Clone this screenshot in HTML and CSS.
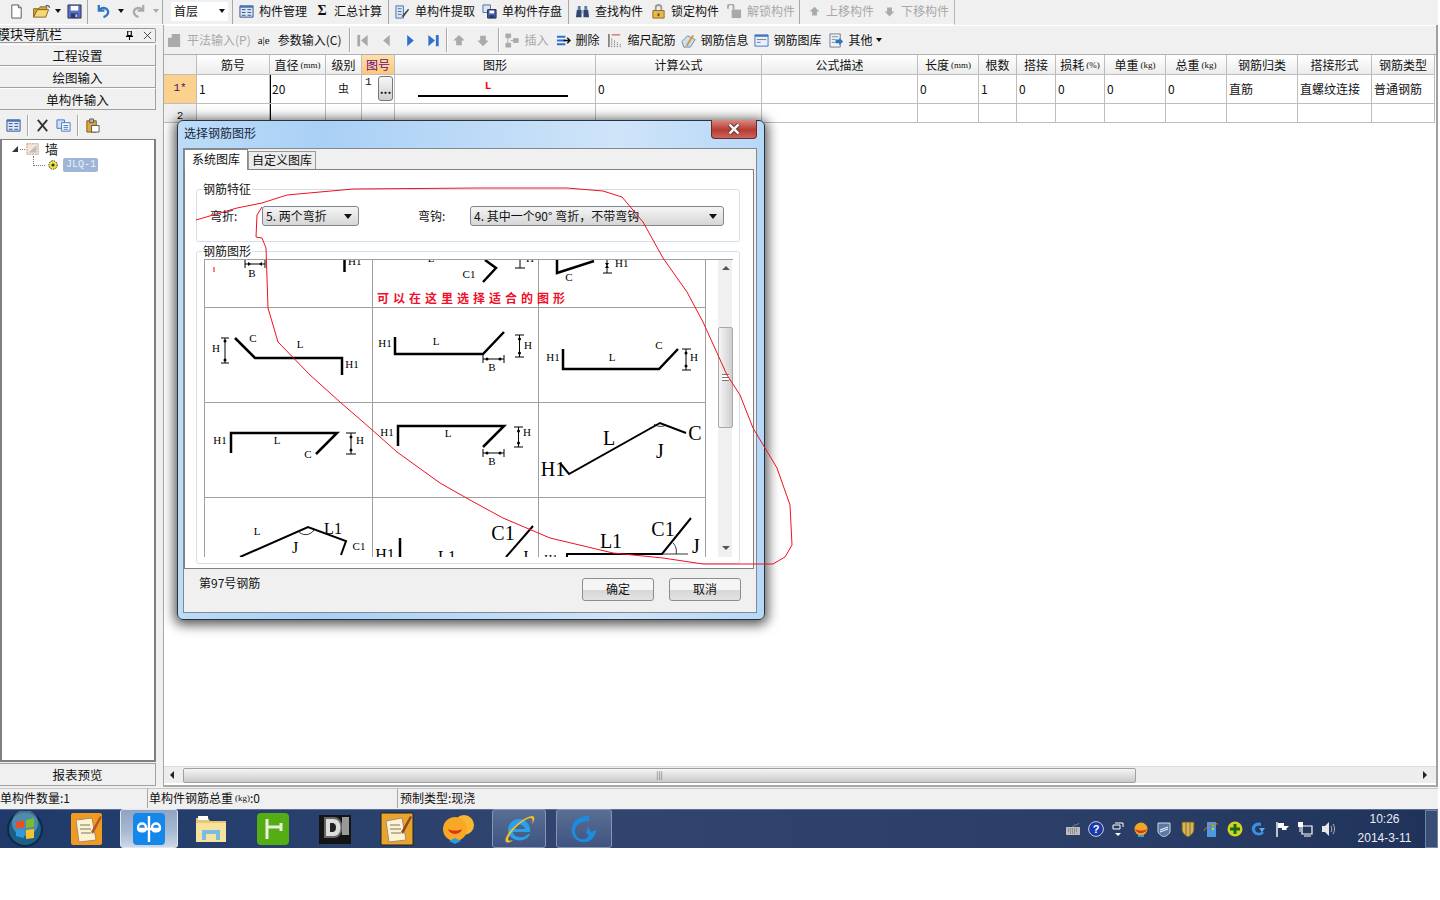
FILE: index.html
```html
<!DOCTYPE html>
<html lang="zh-CN">
<head>
<meta charset="utf-8">
<title>选择钢筋图形</title>
<link rel="stylesheet" href="styles.css">
</head>
<body>
<div class="app">
  <header class="bar1">
    <div class="grp g-file">
      <svg class="ic" viewBox="0 0 16 16"><path d="M3 1h7l3 3v11H3z" fill="#fff" stroke="#555"/><path d="M10 1v3h3" fill="#ddd" stroke="#555"/></svg>
      <svg class="ic wide" viewBox="0 0 20 16"><path d="M1 5h6l1-2h7v3H5L1 14z" fill="#d9a93c" stroke="#8a6516"/><path d="M1 14l4-8h12l-3 8z" fill="#f5d77e" stroke="#8a6516"/><path d="M14 2c2-1 4 0 4 2" fill="none" stroke="#2a6fc9" stroke-width="1.5"/></svg>
      <i class="caret"></i>
      <svg class="ic" viewBox="0 0 16 16"><path d="M1 1h14v14H1z" fill="#5a6fc8" stroke="#334"/><path d="M4 2h8v5H4z" fill="#fff"/><path d="M4 10h8v5H4z" fill="#2c3a7a"/><path d="M9 11h2v3H9z" fill="#ccd"/></svg>
    </div>
    <div class="grp g-undo">
      <svg class="ic" viewBox="0 0 16 16"><path d="M3 1v6h6M4 6c3-3 8-2 9 2 0 3-2 5-5 6" fill="none" stroke="#2e74c6" stroke-width="2.4"/></svg>
      <i class="caret"></i>
      <svg class="ic" viewBox="0 0 16 16"><path d="M13 1v6H7M12 6C9 3 4 4 3 8c0 3 2 5 5 6" fill="none" stroke="#a9a9a9" stroke-width="2.4"/></svg>
      <i class="caret off"></i>
    </div>
    <div class="grp g-floor"><div class="floor"><span>首层</span><i class="caret"></i></div></div>
    <div class="grp g-a">
      <span class="tool"><svg class="ic" viewBox="0 0 16 16"><path d="M1 2h14v12H1z" fill="#dfe8f7" stroke="#2c4f8a"/><path d="M1 2h14v2H1z" fill="#4473b8"/><path d="M3 6h4M3 9h4M3 12h4M9 6h4M9 9h4M9 12h4" stroke="#2c4f8a"/></svg>构件管理</span>
      <span class="tool"><b class="sigma">Σ</b>汇总计算</span>
    </div>
    <div class="grp g-b">
      <span class="tool"><svg class="ic" viewBox="0 0 16 16"><path d="M1 2h8v13H1z" fill="#dbe6f5" stroke="#456fa8"/><path d="M3 5h4M3 8h4M3 11h4" stroke="#456fa8"/><path d="M7 13l7-8 1 1-6 8z" fill="#444"/></svg>单构件提取</span>
    </div>
    <div class="grp g-c">
      <span class="tool"><svg class="ic" viewBox="0 0 16 16"><path d="M1 1h8v8H1z" fill="#dbe6f5" stroke="#456fa8"/><path d="M6 6h9v9H6z" fill="#4a62b8" stroke="#223"/><path d="M8 7h5v3H8z" fill="#fff"/><path d="M8 12h5v3H8z" fill="#223a70"/></svg>单构件存盘</span>
    </div>
    <div class="grp g-d">
      <span class="tool"><svg class="ic" viewBox="0 0 16 16"><path d="M2 6h5v8H1zM9 6h5l1 8H9z" fill="#33456e"/><path d="M3 2h3v4H3zM10 2h3v4h-3z" fill="#5678a8"/><path d="M7 7h2v3H7z" fill="#8aa"/></svg>查找构件</span>
      <span class="tool"><svg class="ic" viewBox="0 0 16 16"><path d="M5 7V4a3 3 0 016 0v3" fill="none" stroke="#999" stroke-width="2"/><path d="M2 7h12v8H2z" fill="#e9b94a" stroke="#8c6a1c"/><path d="M7 10h2v3H7z" fill="#6a4a10"/></svg>锁定构件</span>
      <span class="tool dim"><svg class="ic" viewBox="0 0 16 16"><path d="M1 5V3a3 3 0 016 0v3" fill="none" stroke="#aaa" stroke-width="2"/><path d="M5 6h10v9H5z" fill="#a9a9a9"/></svg>解锁构件</span>
    </div>
    <div class="grp g-e">
      <span class="tool dim"><svg class="ic" viewBox="0 0 16 16"><path d="M8 2l6 6h-3v5H5V8H2z" fill="#aaa"/></svg>上移构件</span>
      <span class="tool dim"><svg class="ic" viewBox="0 0 16 16"><path d="M8 14l6-6h-3V3H5v5H2z" fill="#aaa"/></svg>下移构件</span>
    </div>
  </header>

  <div class="main">
    <aside class="nav">
      <div class="nav-title"><span>模块导航栏</span><span class="nav-ctl"><svg class="pin" viewBox="0 0 10 10"><path d="M3 0h4v5H3zM1 6h8M5 6v4" fill="none" stroke="#000" stroke-width="1.2"/></svg><svg class="pin" viewBox="0 0 10 10"><path d="M1 1l8 8M9 1l-8 8" stroke="#333"/></svg></span></div>
      <div class="nav-btn">工程设置</div>
      <div class="nav-btn">绘图输入</div>
      <div class="nav-btn">单构件输入</div>
      <div class="nav-tools">
        <svg class="ic" viewBox="0 0 16 16"><path d="M1 2h14v12H1z" fill="#dfe8f7" stroke="#2c4f8a"/><path d="M1 2h14v2H1z" fill="#4473b8"/><path d="M3 6h4M3 9h4M3 12h4M9 6h4M9 9h4M9 12h4" stroke="#2c4f8a"/></svg>
        <i class="sep"></i>
        <svg class="ic" viewBox="0 0 16 16"><path d="M3 2l10 12M13 2L3 14" stroke="#333" stroke-width="2"/></svg>
        <svg class="ic" viewBox="0 0 16 16"><path d="M1 2h8v9H1z" fill="#cfe0f7" stroke="#3f74c0"/><path d="M6 5h9v9H6z" fill="#fff" stroke="#3f74c0"/><path d="M8 8h5M8 10h5M8 12h5" stroke="#3f74c0"/></svg>
        <i class="sep"></i>
        <svg class="ic" viewBox="0 0 16 16"><path d="M2 3h10v12H2z" fill="#dfa93a" stroke="#7a5a14"/><path d="M5 1h4v4H5z" fill="#bbb" stroke="#555"/><path d="M7 8h8v7H7z" fill="#fff" stroke="#555"/></svg>
      </div>
      <div class="tree">
        <div class="tree-row">
          <svg class="tw" viewBox="0 0 8 8"><path d="M7 1v6H1z" fill="#333"/></svg>
          <i class="dots"></i>
          <svg class="ic" viewBox="0 0 16 16"><path d="M1 2h13v12H1z" fill="#f1e7dc" stroke="#b98b6b" stroke-dasharray="2 1"/><path d="M3 12l9-8v8z" fill="#999" opacity=".55"/></svg>
          <span class="tree-txt">墙</span>
        </div>
        <div class="tree-row sub">
          <i class="elbow"></i>
          <svg class="ic gear" viewBox="0 0 12 12"><circle cx="6" cy="6" r="4.2" fill="#f2e23a" stroke="#333" stroke-dasharray="1.5 1"/><circle cx="6" cy="6" r="1.6" fill="#333"/></svg>
          <span class="tree-sel">JLQ-1</span>
        </div>
      </div>
      <div class="nav-btn report">报表预览</div>
    </aside>

    <section class="work">
      <div class="bar2">
        <span class="tool dim"><svg class="ic" viewBox="0 0 16 16"><path d="M1 5h4V1h9v14H1z" fill="#aaa"/></svg>平法输入(P)</span>
        <span class="tool"><b class="ae">a|e</b>参数输入(C)</span>
        <i class="sep"></i>
        <span class="navs n1">
          <svg class="ic" viewBox="0 0 16 16"><path d="M3 2h3v12H3zM14 2v12L7 8z" fill="#a9a9a9"/></svg>
          <svg class="ic" viewBox="0 0 16 16"><path d="M12 2v12L5 8z" fill="#a9a9a9"/></svg>
          <svg class="ic" viewBox="0 0 16 16"><path d="M5 2v12l7-6z" fill="#2e6fd0"/></svg>
          <svg class="ic" viewBox="0 0 16 16"><path d="M2 2v12l7-6zM10 2h3v12h-3z" fill="#2e6fd0"/></svg>
        </span>
        <i class="sep"></i>
        <span class="navs n2">
          <svg class="ic" viewBox="0 0 16 16"><path d="M8 2l6 6h-3v5H5V8H2z" fill="#aaa"/></svg>
          <svg class="ic" viewBox="0 0 16 16"><path d="M8 14l6-6h-3V3H5v5H2z" fill="#aaa"/></svg>
        </span>
        <i class="sep"></i>
        <span class="tool dim nudge-l"><svg class="ic" viewBox="0 0 16 16"><path d="M1 1h5v4H1zM1 11h5v4H1zM9 6h5v4H9zM3 5v6M6 8h3" fill="#aaa" stroke="#aaa"/></svg>插入</span>
        <span class="tool"><svg class="ic" viewBox="0 0 16 16"><path d="M1 4h9M1 8h9M1 12h9" stroke="#2e6fd0" stroke-width="2"/><path d="M8 8h7M12 5l3 3-3 3" fill="none" stroke="#111" stroke-width="1.5"/></svg>删除</span>
        <span class="tool nudge-r"><svg class="ic" viewBox="0 0 16 16"><path d="M1 1v14" stroke="#222"/><path d="M4 2h9" stroke="#c33"/><path d="M4 15V6M7 15V8M10 15v-5M13 15v-3" stroke="#555" stroke-dasharray="1 1"/></svg>缩尺配筋</span>
        <span class="tool nudge-l"><svg class="ic" viewBox="0 0 16 16"><path d="M1 9l6-6 8 4-5 8H3z" fill="#cfe0f0" stroke="#68a"/><path d="M5 13l7-11 2 1-7 11z" fill="#d89a3c"/></svg>钢筋信息</span>
        <span class="tool nudge-l"><svg class="ic" viewBox="0 0 16 16"><path d="M1 2h14v12H1z" fill="#e9f0fb" stroke="#3f74c0"/><path d="M1 2h14v2H1z" fill="#3f74c0"/><path d="M3 7h10M3 10h4" stroke="#777"/></svg>钢筋图库</span>
        <span class="tool"><svg class="ic" viewBox="0 0 16 16"><path d="M1 1h11v14H1z" fill="#eef3fa" stroke="#778"/><path d="M3 4h7M3 7h4M3 10h4" stroke="#889"/><path d="M7 7h4V5l4 4-4 4v-2H7z" fill="#2e74c6"/></svg>其他<i class="caret small"></i></span>
      </div>

      <div class="grid">
        <div class="th hd"></div><div class="th">筋号</div><div class="th">直径<small>(mm)</small></div><div class="th">级别</div><div class="th pick">图号</div><div class="th">图形</div><div class="th">计算公式</div><div class="th">公式描述</div><div class="th">长度<small>(mm)</small></div><div class="th">根数</div><div class="th">搭接</div><div class="th">损耗<small>(%)</small></div><div class="th">单重<small>(kg)</small></div><div class="th">总重<small>(kg)</small></div><div class="th">钢筋归类</div><div class="th">搭接形式</div><div class="th">钢筋类型</div>

        <div class="td hd cur">1*</div><div class="td">1</div><div class="td act">20</div><div class="td lvl">虫</div><div class="td fignum"><sup>1</sup><span class="more">...</span></div><div class="td figcell"><div class="fig">L</div></div><div class="td">0</div><div class="td"></div><div class="td">0</div><div class="td">1</div><div class="td">0</div><div class="td">0</div><div class="td">0</div><div class="td">0</div><div class="td">直筋</div><div class="td">直螺纹连接</div><div class="td">普通钢筋</div>

        <div class="tr hd num">2</div><div class="tr"></div><div class="tr act"></div><div class="tr"></div><div class="tr"></div><div class="tr"></div><div class="tr"></div><div class="tr"></div><div class="tr"></div><div class="tr"></div><div class="tr"></div><div class="tr"></div><div class="tr"></div><div class="tr"></div><div class="tr"></div><div class="tr"></div><div class="tr"></div>
      </div>

      <div class="canvas"></div>
      <div class="hscroll"><span class="arr l"></span><div class="hthumb"><em>|||</em></div><span class="arr r"></span></div>
    </section>
  </div>

  <footer class="status">
    <div class="st s-a">单构件数量:1</div>
    <div class="st s-b">单构件钢筋总重<small>(kg)</small>:0</div>
    <div class="st s-c">预制类型:现浇</div>
  </footer>

  <nav class="taskbar">
    <div class="orb"><svg viewBox="0 0 36 36" class="orbsvg"><circle cx="18" cy="18" r="17" fill="#1d5f86" stroke="#0f2a44" stroke-width="2"/><circle cx="18" cy="12" r="13" fill="#7fb9d8" opacity=".5"/><path d="M9 11l8-2v8H9z" fill="#e8502a"/><path d="M19 9l8-2v9l-8 1z" fill="#7cbb2e"/><path d="M9 19h8v8l-8-2z" fill="#2f9ae0"/><path d="M19 19l8-1v9l-8 1z" fill="#f6c22e"/></svg></div>
    <div class="slot"><svg class="app-ic" viewBox="0 0 34 34"><rect x="1" y="1" width="31" height="32" rx="2" fill="#f09a1e"/><path d="M6 8l16-2 4 22-17 2z" fill="#fdf3d0" stroke="#a87"/><path d="M10 13h10M10 17h11M11 21h10" stroke="#776"/><path d="M21 20L30 4l2 1-9 17z" fill="#b5532a"/></svg></div>
    <div class="slot on"><svg class="app-ic" viewBox="0 0 34 34"><rect x="1" y="1" width="32" height="32" rx="4" fill="#1488ea"/><path d="M17 4v26M6 16c0-6 8-6 8 0 0 5-8 4-8 0zM28 16c0-6-8-6-8 0 0 5 8 4 8 0zM7 17h20" fill="none" stroke="#fff" stroke-width="2.4"/></svg></div>
    <div class="slot"><svg class="app-ic" viewBox="0 0 34 34"><path d="M2 6h12l2 3h16v21H2z" fill="#e6c877"/><path d="M4 4h10v4H4z" fill="#fff"/><path d="M2 11h30v19H2z" fill="#f7e39e"/><path d="M8 28V18h18v10h-4v-6H12v6z" fill="#79bde0"/></svg></div>
    <div class="slot"><svg class="app-ic" viewBox="0 0 34 34"><rect x="1" y="1" width="32" height="32" rx="4" fill="#55ad14"/><path d="M11 7v20M11 15h14M25 11v8" fill="none" stroke="#e8efe0" stroke-width="3"/></svg></div>
    <div class="slot"><svg class="app-ic" viewBox="0 0 34 34"><rect x="1" y="3" width="32" height="29" fill="#141414"/><path d="M7 6h9c10 0 10 19 0 19H7z" fill="#ddd" stroke="#666" stroke-width="2"/><path d="M12 11h3c4 0 4 9 0 9h-3z" fill="#222"/><path d="M24 5h7v18h-7z" fill="#999"/></svg></div>
    <div class="slot"><svg class="app-ic" viewBox="0 0 34 34"><rect x="1" y="1" width="32" height="32" fill="#e8a52c" stroke="#222"/><path d="M6 9l16-3 4 22-17 2z" fill="#fdf3d0" stroke="#a87"/><path d="M10 13h10M10 17h11M11 21h10" stroke="#776"/><path d="M21 20L30 4l2 1-9 17z" fill="#8a4a22"/></svg></div>
    <div class="slot"><svg class="app-ic" viewBox="0 0 34 34"><circle cx="22" cy="13" r="10" fill="#f7b733"/><circle cx="13" cy="17" r="12" fill="#f9a825"/><path d="M6 17c4 2 10 2 14 0-1 6-12 7-14 0z" fill="#d9341c"/><path d="M7 29l6-3 6 3-6 3z" fill="#2f9ae0"/></svg></div>
    <div class="slot btn ie"><svg class="app-ic" viewBox="0 0 34 34"><path d="M6 18a11 11 0 0122 0v2H11c1 6 11 7 15 2h2c-4 10-22 8-22-4zm5-1h12c-1-6-11-6-12 0z" fill="#2ca0e8"/><path d="M4 30c-4-5 14-24 26-26 4 0 2 6 0 8 1-3 1-6-2-6C20 8 8 20 6 27c0 2 2 2 5 1-3 3-6 3-7 2z" fill="#f6c02c"/></svg></div>
    <i class="grip"></i>
    <div class="slot btn gl"><svg class="app-ic" viewBox="0 0 34 34"><path d="M22 4C10 3 3 12 5 21c2 9 14 12 20 6 3-3 4-6 4-9l-5 2-3-5-2 6c3 1 3 3 1 5-4 3-11 1-12-6-1-6 6-12 14-11z" fill="#1f8be0"/></svg></div>
    <div class="tray">
      <svg class="ti" viewBox="0 0 16 16"><path d="M1 6h14v8H1z" fill="#bbb"/><path d="M3 8h10M3 10h10M5 12h6" stroke="#666" stroke-dasharray="1 1"/><path d="M8 6c0-3 4-1 6-4" fill="none" stroke="#888"/></svg>
      <svg class="ti t-l" viewBox="0 0 16 16"><circle cx="8" cy="8" r="7.400" fill="#1a3aa8" stroke="#ccd"/><text x="8" y="12" class="ti-q">?</text></svg>
      <span class="ti mini t-l"><svg viewBox="0 0 12 16"><path d="M1 4h7v4H1zM3 2h8v4" fill="none" stroke="#fff"/><path d="M3 12h6l-3 3z" fill="#fff"/></svg></span>
      <svg class="ti t-l" viewBox="0 0 16 16"><circle cx="8" cy="8" r="6.500" fill="#f0a820"/><path d="M2 8c4 2 9 2 12 0-1 5-10 6-12 0z" fill="#d9341c"/><path d="M5 15h6" stroke="#2f9ae0" stroke-width="2"/></svg>
      <svg class="ti" viewBox="0 0 16 16"><path d="M2 2h12v8c0 3-4 5-6 6-2-1-6-3-6-6z" fill="#5a78a8" stroke="#cdd"/><path d="M4 9l8-3M4 11l8-3" stroke="#fff"/></svg>
      <svg class="ti" viewBox="0 0 16 16"><path d="M2 1h12v8c0 3-4 6-6 7-2-1-6-4-6-7z" fill="#d9b45a" stroke="#6a5520"/><path d="M6 1v13M10 1v13" stroke="#8a6e2a"/></svg>
      <svg class="ti" viewBox="0 0 16 16"><path d="M4 1h9v15H4z" fill="#4b9be0"/><path d="M6 4h2v2H6z" fill="#e8502a"/><path d="M9 4h2v2H9z" fill="#7cbb2e"/><path d="M6 7h2v2H6z" fill="#2f9ae0"/><path d="M9 7h2v2H9z" fill="#f6c22e"/><path d="M1 10C3 5 11 2 15 3" fill="none" stroke="#e87a1c"/></svg>
      <svg class="ti" viewBox="0 0 16 16"><circle cx="8" cy="8" r="7.500" fill="#d9d21c"/><path d="M8 3v10M3 8h10" stroke="#116b1e" stroke-width="3"/></svg>
      <svg class="ti" viewBox="0 0 16 16"><path d="M11 2C5 0 1 5 2 9c1 6 9 7 12 3l-2-2c-2 3-7 2-7-2 0-3 3-4 6-3z" fill="#3b8fe0"/><path d="M9 7h6l-3 4z" fill="#5ab0f0"/></svg>
      <svg class="ti" viewBox="0 0 16 16"><path d="M3 1v15" stroke="#fff" stroke-width="1.400"/><path d="M4 2h6v3h5l-3 3 1 1H8V7H4z" fill="#fff"/></svg>
      <svg class="ti" viewBox="0 0 16 16"><path d="M5 5h10v8H5zM7 15h7" fill="#24365c" stroke="#fff" stroke-width="1.200"/><path d="M1 1h5v5H1z" fill="#fff"/><path d="M3 6v5" stroke="#fff"/></svg>
      <svg class="ti" viewBox="0 0 16 16"><path d="M1 5h3l4-4v14l-4-4H1z" fill="#e6e6e6"/><path d="M10 5c1 2 1 4 0 6M12 3c2 3 2 7 0 10" fill="none" stroke="#bbb"/></svg>
    </div>
    <div class="clock"><span>10:26</span><span>2014-3-11</span></div>
    <div class="desk"></div>
  </nav>

  <div class="dialog">
    <div class="d-title"><span>选择钢筋图形</span><div class="d-close"><svg viewBox="0 0 14 12" class="d-x"><path d="M2.500 1.500l9 9M11.500 1.500l-9 9" stroke="#4a2020" stroke-width="4"/><path d="M2.500 1.500l9 9M11.500 1.500l-9 9" stroke="#f4f4f4" stroke-width="2.500"/></svg></div></div>
    <div class="d-frame">
      <div class="tabs"><div class="tab active">系统图库</div><div class="tab">自定义图库</div></div>
      <div class="d-body">
        <div class="gbox g1">
          <span class="legend">钢筋特征</span>
          <label class="fld f1">弯折:</label><div class="combo c1"><span>5. 两个弯折</span><i class="caret"></i></div>
          <label class="fld f2">弯钩:</label><div class="combo c2"><span>4. 其中一个90° 弯折&#65292;不带弯钩</span><i class="caret"></i></div>
        </div>
        <div class="gbox g2">
          <span class="legend">钢筋图形</span>
          <div class="pics">
            <div class="cell c-w1 r1"><svg width="168" height="48" viewBox="204 259 168 48">
              <path d="M214 267v5" stroke="#f00"/><path d="M245 260v8M265 260v8M245 264h20" stroke="#000"/><path d="M248 262v4l3-2zM262 262v4l-3-2z"/><text x="252" y="277" class="sm" text-anchor="middle">B</text>
              <path d="M344.500 259v13" class="bold"/><text x="348" y="265" class="sm">H1</text></svg>
            </div>
            <div class="cell c-w2 r1"><svg width="166" height="48" viewBox="372 259 166 48">
              <text x="431" y="262" class="sm" text-anchor="middle">L</text><text x="469" y="278" class="sm" text-anchor="middle">C1</text>
              <path d="M485 260l11 8-13 14" class="bold"/><path d="M520 259v9M515 268h10" stroke="#000"/><text x="526" y="262" class="sm">H</text></svg>
            </div>
            <div class="cell c-w3 r1"><svg width="167" height="48" viewBox="538 259 167 48">
              <path d="M557 259v14l37-12" class="bold"/><text x="569" y="281" class="sm" text-anchor="middle">C</text>
              <path d="M607 259v14M603 273h9" stroke="#000"/><path d="M605 263h4l-2 3zM605 268h4l-2-3z"/><text x="615" y="267" class="sm">H1</text></svg>
            </div>
            <div class="cell c-w1 r2"><svg width="168" height="95" viewBox="204 307 168 95">
              <path d="M235 338l20 20h87v17" class="bold"/><text x="216" y="352" class="sm" text-anchor="middle">H</text><text x="253" y="342" class="sm" text-anchor="middle">C</text><text x="300" y="348" class="sm" text-anchor="middle">L</text><text x="352" y="368" class="sm" text-anchor="middle">H1</text>
              <path d="M221 338h8M225 338v25M221 363h8" stroke="#000"/><circle cx="225" cy="341" r="1.500"/><circle cx="225" cy="360" r="1.500"/></svg>
            </div>
            <div class="cell c-w2 r2"><svg width="166" height="95" viewBox="372 307 166 95">
              <path d="M395 337v17h88l21-22" class="bold"/><text x="385" y="347" class="sm" text-anchor="middle">H1</text><text x="436" y="345" class="sm" text-anchor="middle">L</text><text x="528" y="349" class="sm" text-anchor="middle">H</text><text x="492" y="371" class="sm" text-anchor="middle">B</text>
              <path d="M515 335h9M519.500 335v22M515 357h9M483 355v8M504 355v8M483 359h21" stroke="#000"/><circle cx="519.500" cy="339" r="1.500"/><circle cx="519.500" cy="353" r="1.500"/><circle cx="487" cy="359" r="1.500"/><circle cx="500" cy="359" r="1.500"/></svg>
            </div>
            <div class="cell c-w3 r2"><svg width="167" height="95" viewBox="538 307 167 95">
              <path d="M563 349v20h96l19-20" class="bold"/><text x="553" y="361" class="sm" text-anchor="middle">H1</text><text x="612" y="361" class="sm" text-anchor="middle">L</text><text x="659" y="349" class="sm" text-anchor="middle">C</text><text x="694" y="361" class="sm" text-anchor="middle">H</text>
              <path d="M682 349h9M686 349v21M682 370h9" stroke="#000"/><circle cx="686" cy="353" r="1.500"/><circle cx="686" cy="366" r="1.500"/></svg>
            </div>
            <div class="cell c-w1 r2"><svg width="168" height="95" viewBox="204 402 168 95">
              <path d="M231 453v-20h106l-21 21" class="bold"/><text x="220" y="444" class="sm" text-anchor="middle">H1</text><text x="277" y="444" class="sm" text-anchor="middle">L</text><text x="308" y="458" class="sm" text-anchor="middle">C</text><text x="360" y="444" class="sm" text-anchor="middle">H</text>
              <path d="M346 433h10M351 433v21M346 454h10" stroke="#000"/><circle cx="351" cy="437" r="1.500"/><circle cx="351" cy="450" r="1.500"/></svg>
            </div>
            <div class="cell c-w2 r2"><svg width="166" height="95" viewBox="372 402 166 95">
              <path d="M398 446v-20h106l-21 21" class="bold"/><text x="387" y="436" class="sm" text-anchor="middle">H1</text><text x="448" y="437" class="sm" text-anchor="middle">L</text><text x="527" y="436" class="sm" text-anchor="middle">H</text><text x="492" y="465" class="sm" text-anchor="middle">B</text>
              <path d="M514 427h9M518.500 427v20M514 447h9M483 449v8M504 449v8M483 453h21" stroke="#000"/><circle cx="518.500" cy="431" r="1.500"/><circle cx="518.500" cy="443" r="1.500"/><circle cx="487" cy="453" r="1.500"/><circle cx="500" cy="453" r="1.500"/></svg>
            </div>
            <div class="cell c-w3 r2"><svg width="167" height="95" viewBox="538 402 167 95">
              <path d="M560 463l9 11 91-51 26 10" class="med"/><path d="M654 424c3 3 9 3 12 1" class="arc"/>
              <text x="609" y="445" class="lg" text-anchor="middle">L</text><text x="695" y="440" class="lg" text-anchor="middle">C</text><text x="660" y="458" class="lg" text-anchor="middle">J</text><text x="553" y="476" class="lg" text-anchor="middle">H1</text></svg>
            </div>
            <div class="cell c-w1 r4"><svg width="168" height="60" viewBox="204 497 168 60">
              <path d="M240 557l68-30 38 14-5 14" class="med"/><path d="M298 531c4 5 12 5 16-1" class="arc"/>
              <text x="257" y="535" class="sm" text-anchor="middle">L</text><text x="333" y="534" class="md" text-anchor="middle">L1</text><text x="295" y="553" class="md" text-anchor="middle">J</text><text x="359" y="550" class="sm" text-anchor="middle">C1</text></svg>
            </div>
            <div class="cell c-w2 r4"><svg width="166" height="60" viewBox="372 497 166 60">
              <path d="M400 538v19" class="bold"/><path d="M533 526l-27 31" class="med"/>
              <text x="385" y="560" class="md" text-anchor="middle">H1</text><text x="447" y="562" class="md" text-anchor="middle">L1</text><text x="503" y="540" class="lg" text-anchor="middle">C1</text><text x="525" y="562" class="md" text-anchor="middle">J</text></svg>
            </div>
            <div class="cell c-w3 r4"><svg width="167" height="60" viewBox="538 497 167 60">
              <path d="M567 557v-3h95l29-36" class="med"/><path d="M662 554h26M673 543c3 3 4 7 3 11" class="arc"/>
              <text x="551" y="562" class="sm" text-anchor="middle">H1</text><text x="611" y="548" class="lg" text-anchor="middle">L1</text><text x="663" y="536" class="lg" text-anchor="middle">C1</text><text x="696" y="553" class="lg" text-anchor="middle">J</text></svg>
            </div>
            <div class="vscroll">
              <span class="varr up"></span>
              <div class="vthumb"><em></em></div>
              <span class="varr dn"></span>
            </div>
            <span class="hint">可以在这里选择适合的图形</span>
          </div>
        </div>
      </div>
      <div class="d-foot">
        <span class="which">第97号钢筋</span>
        <div class="d-btns"><div class="pbtn">确定</div><div class="pbtn">取消</div></div>
      </div>
    </div>
  </div>

  <svg class="scribble" width="1438" height="848" viewBox="0 0 1438 848"><path d="M196 220L237 208L262 203L287 195L320 192L353 189L480 188L567 188L603 191L622 197L643 222L663 258L687 292L703 322L727 375L740 395L753 428L777 468L790 505L792 545L785 557L773 564L703 564L663 558L613 553L550 538L503 518L470 500L440 483L397 452L370 428L340 402L310 375L278 342L268 308L266 248L262 238L256 237L257 215L262 207" fill="none" stroke="#f01020" stroke-linejoin="round"/></svg>
</div>
</body>
</html>
```

FILE: styles.css
```css
* { box-sizing: border-box; }
html, body { margin: 0; padding: 0; background: #fff; }
body { font: 12px/1.2 "Noto Sans CJK SC", "Liberation Sans", sans-serif; color: #111; overflow: hidden; }
small { font-size: 9px; font-family: "Liberation Serif", serif; margin-left: 2px; }
.app { position: relative; width: 1438px; height: 848px; display: flex; flex-direction: column; background: #f0f0f0; overflow: hidden; }
.ic { width: 15px; height: 15px; flex: none; display: block; }
.ic.wide { width: 20px; }
.caret { width: 0; height: 0; border: 3px solid transparent; border-top: 4px solid #111; border-bottom: 0; display: inline-block; flex: none; }
.caret.off { border-top-color: #aaa; }
.caret.small { margin-left: -2px; }
.tool { display: inline-flex; align-items: center; gap: 5px; white-space: nowrap; }
.dim { color: #a8a8a8; }
.sep { width: 1px; height: 24px; background: #a8a8a8; border-right: 1px solid #fff; box-sizing: content-box; flex: none; }

.bar1 { height: 25px; width: 955px; display: flex; align-items: flex-start; flex: none; background: #f0f0f0; border-right: 1px solid #b5b5b5; border-bottom: 1px solid #fff; }
.grp { height: 24px; padding-bottom: 2px; display: flex; align-items: center; flex: none; border-right: 1px solid #a8a8a8; }
.g-file { width: 88px; padding-left: 9px; gap: 3px; }
.g-file .ic.wide + .caret { margin-right: 3px; }
.g-file .ic:first-child { margin-right: 5px; }
.g-undo { width: 75px; padding-left: 8px; gap: 7px; }
.g-floor { width: 70px; padding-left: 8px; }
.floor { width: 57px; height: 19px; background: #fff; display: flex; align-items: center; justify-content: space-between; padding: 0 2px 0 3px; }
.floor .caret { margin-right: 1px; }
.g-a { width: 156px; padding-left: 6px; gap: 9px; }
.sigma { width: 12px; font: bold 14px "Liberation Serif", serif; text-align: center; margin-right: 1px; }
.g-b { width: 93px; padding-left: 6px; border-right: 0; }
.g-c { width: 87px; padding-left: 0; }
.g-d { width: 231px; padding-left: 6px; gap: 8px; }
.g-e { width: 155px; padding-left: 8px; gap: 9px; border-right: 0; }
.g-e .ic { width: 13px; }

.main { flex: 1; display: flex; min-height: 0; }
.nav { width: 156px; flex: none; display: flex; flex-direction: column; padding-top: 3px; }
.nav-title { height: 15px; display: flex; justify-content: space-between; align-items: center; font-size: 13px; border: 1px solid #999; border-left: 0; border-radius: 0 2px 2px 0; white-space: nowrap; margin-bottom: 1px; }
.nav-title > span:first-child { margin: -3px 0 0 -3px; }
.nav-ctl { display: flex; gap: 9px; padding-right: 3px; }
.pin { width: 9px; height: 9px; display: block; }
.nav-btn { height: 22px; flex: none; display: flex; align-items: center; justify-content: center; font-size: 12.500px; border-top: 1px solid #fff; border-bottom: 1px solid #a0a0a0; border-right: 1px solid #a0a0a0; background: #f0f0f0; }
.nav-tools { height: 28px; flex: none; margin-top: 1px; display: flex; align-items: center; gap: 6px; padding-left: 6px; }
.nav-tools .sep { height: 21px; }
.tree { flex: 1; background: #fff; border: 1px solid #808080; border-width: 1px 2px 2px 2px; margin: 0 0 1px 0; padding: 1px 0 0 9px; }
.tree-row { display: flex; align-items: center; height: 16px; gap: 1px; }
.tw { width: 8px; height: 8px; }
.dots { width: 5px; border-top: 1px dotted #777; }
.tree-row .ic { width: 14px; height: 14px; }
.tree-txt { margin-left: 4px; font-size: 13px; }
.tree-row.sub { padding-left: 22px; gap: 2px; }
.elbow { width: 12px; height: 10px; margin-top: -8px; flex: none; border-left: 1px dotted #777; border-bottom: 1px dotted #777; }
.gear { margin: 0 2px 0 0; width: 12px !important; height: 12px !important; }
.tree-sel { background: #9fb6d8; color: #e9f0fa; font: 10px "Liberation Mono", monospace; padding: 1px 3px; border-radius: 2px; height: 14px; width: 35px; overflow: hidden; white-space: nowrap; }
.report { height: 23px; margin-bottom: 1px; border-top: 1px solid #a0a0a0; }

.work { flex: 1; margin-left: 7px; display: flex; flex-direction: column; min-width: 0; border-left: 1px solid #a8a8a8; border-right: 2px solid #a0a0a0; border-bottom: 2px solid #a8a8a8; background: #fff; }
.bar2 { height: 30px; flex: none; display: flex; align-items: center; gap: 7px; padding-left: 3px; background: #f0f0f0; border-top: 1px solid #fff; border-bottom: 1px solid #b0b0b0; }
.ae { width: 15px; font: 11px "Liberation Serif", serif; white-space: nowrap; }
.navs { display: inline-flex; gap: 8px; }
.navs .ic { width: 16px; }
.n1 { margin: 0 -3px 0 -4px; }
.n2 { margin-left: -4px; }
.nudge-l { margin-left: -2px; }
.nudge-r { margin-left: 1px; }

.grid { display: grid; flex: none; grid-template-columns: 33px 73px 56px 36px 33px 201px 166px 156px 61px 38px 39px 49px 61px 61px 71px 74px 63px; grid-template-rows: 20px 29px 19px; width: 1271px; background: #fff; }
.th, .td, .tr { border-right: 1px solid #bdbdbd; border-bottom: 1px solid #bdbdbd; white-space: nowrap; overflow: hidden; display: flex; align-items: center; }
.th { justify-content: center; padding-top: 1px; background: linear-gradient(#fff, #ececec); }
.td { padding-left: 2px; background: #fff; }
.lvl { justify-content: center; font-size: 11px; padding-left: 0; }
.hd { background: #f0f0f0; justify-content: center; padding-left: 0; }
.cur { background: #fcd18d; color: #4a0a78; font-family: "Liberation Mono", monospace; font-size: 11px; }
.num { font-family: "Liberation Mono", monospace; font-size: 11px; align-items: flex-end; line-height: 1; }
.pick { background: linear-gradient(#fde0a8, #fbc87c); color: #6a0a88; }
.act { box-shadow: inset 1px 0 0 #000; }
.fignum { padding: 0; align-items: flex-start; }
.fignum sup { font-size: 11px; font-family: "Liberation Mono", monospace; margin: 2px 0 0 3px; line-height: 1; }
.more { width: 15px; height: 25px; margin: 1px 1px 0 auto; border: 1px solid #777; border-radius: 3px; background: linear-gradient(#f7f7f7, #cfcfcf); display: flex; align-items: center; justify-content: center; font-weight: bold; line-height: 1; }
.figcell { justify-content: flex-start; padding-left: 23px; }
.fig { width: 150px; height: 18px; margin-top: -3px; padding-right: 10px; border-bottom: 2px solid #000; color: #f00; text-align: center; font: bold 11px/14px "Liberation Mono", monospace; }
.canvas { flex: 1; background: #fff; }
.hscroll { height: 17px; flex: none; margin-bottom: 2px; background: #ededed; display: flex; align-items: center; border-top: 1px solid #dcdcdc; }
.arr { width: 0; height: 0; border: 4px solid transparent; flex: none; }
.arr.l { border-right: 4px solid #222; border-left: 0; margin: 0 9px 0 6px; }
.arr.r { border-left: 4px solid #222; border-right: 0; margin-left: 287px; }
.hthumb { width: 953px; height: 15px; background: linear-gradient(#f5f5f5, #c9c9c9); border: 1px solid #a0a0a0; border-radius: 2px; display: flex; align-items: center; justify-content: center; color: #666; font-size: 8px; }
.hthumb em { font-style: normal; }

.status { height: 22px; flex: none; display: flex; align-items: center; background: #f0f0f0; }
.st { height: 20px; display: flex; align-items: center; white-space: nowrap; border-right: 1px solid #a8a8a8; border-top: 1px solid #c8c8c8; }
.s-a { width: 148px; }
.s-b { width: 250px; padding-left: 1px; }
.s-c { flex: 1; padding-left: 2px; border-right: 0; }

.taskbar { height: 39px; flex: none; display: flex; align-items: center; background: linear-gradient(90deg, #1f3a6a 0, #31456f 40%, #2a3d66 80%, #1f3259 100%); box-shadow: inset 0 1px 0 #5a6f96; color: #fff; }
.orb { width: 56px; height: 39px; flex: none; display: flex; align-items: center; padding-left: 7px; }
.orbsvg { width: 36px; height: 36px; display: block; }
.slot { width: 62px; height: 39px; flex: none; display: flex; align-items: center; justify-content: center; }
.app-ic { width: 34px; height: 34px; display: block; }
.slot.on { width: 58px; margin: 0 2px; background: linear-gradient(#8fa3c2, #a9bad2 60%, #cdd7e6); border: 1px solid #dfe6f0; border-radius: 3px; }
.slot.btn { width: 54px; margin-left: 2px; background: linear-gradient(#5a6f94, #3f5480); border: 1px solid #8696b2; border-radius: 3px; }
.slot.gl { width: 56px; margin-left: 0; }
.grip { width: 10px; height: 37px; flex: none; }
.tray { margin-left: 453px; display: flex; align-items: center; gap: 7.500px; flex: none; }
.ti { width: 16px; height: 16px; display: block; flex: none; }
.t-l { margin-left: -1px; }
.ti.mini svg { width: 12px; height: 16px; display: block; margin-left: 2px; }
.ti-q { font: bold 11px "Liberation Sans", sans-serif; fill: #fff; text-anchor: middle; }
.clock { width: 80px; margin-left: 8px; display: flex; flex-direction: column; align-items: center; gap: 4px; font: 12px/15px "Liberation Sans", sans-serif; color: #e8edf5; flex: none; }
.desk { width: 13px; height: 38px; border: 1px solid #6f82a6; background: #3a4d76; flex: none; }

.dialog { position: absolute; left: 177px; top: 120px; width: 588px; height: 500px; border: 1px solid #29333f; border-radius: 6px; background: linear-gradient(90deg, #bcdcf8 0, #a9d0f5 25%, #cfe4f9 75%, #b6d8f7 100%); box-shadow: 0 2px 12px 3px rgba(0,0,0,.65); padding: 0 7px 6px 5px; display: flex; flex-direction: column; }
.d-title { height: 27px; flex: none; display: flex; align-items: center; padding-left: 1px; color: #15273d; position: relative; }
.d-title > span { margin-top: -2px; }
.d-close { position: absolute; right: 0; top: -1px; width: 46px; height: 19px; border: 1px solid #6a2a2a; border-top: 0; border-radius: 0 0 4px 4px; background: linear-gradient(#d98a80, #b83a30 55%, #c9665e); display: flex; align-items: center; justify-content: center; }
.d-x { width: 14px; height: 12px; display: block; }
.d-frame { flex: 1; border: 1px solid #808890; background: #f0f0f0; display: flex; flex-direction: column; min-height: 0; }
.tabs { height: 20px; flex: none; display: flex; align-items: flex-end; padding-left: 0; }
.tab { height: 18px; width: 68px; padding-left: 3px; border: 1px solid #9a9a9a; border-bottom: 0; background: #ececec; line-height: 15px; white-space: nowrap; }
.tab.active { width: 64px; height: 21px; padding-left: 7px; background: #fff; border-color: #8a8a8a; line-height: 17px; z-index: 1; margin-bottom: -1px; }
.d-body { height: 400px; flex: none; margin-right: 2px; background: #fff; border: 1px solid #808080; padding: 19px 13px 0 11px; display: flex; flex-direction: column; gap: 9px; }
.gbox { position: relative; border: 1px solid #d5dfea; border-radius: 3px; flex: none; }
.g2 { height: 313px; }
.legend { position: absolute; left: 5px; top: -8px; padding: 0 1px; background: #fff; line-height: 14px; white-space: nowrap; z-index: 1; }
.g1 { height: 53px; padding-top: 1px; display: flex; align-items: center; }
.fld { white-space: nowrap; }
.f1 { margin-left: 13px; width: 52px; }
.f2 { margin-left: 59px; width: 52px; }
.combo { height: 20px; display: flex; align-items: center; justify-content: space-between; padding: 0 6px 0 3px; border: 1px solid #7f868e; border-radius: 3px; background: linear-gradient(#f5f5f5, #d6d6d6); white-space: pre; }
.c1 { width: 97px; }
.c2 { width: 254px; }
.combo .caret { border-width: 4px; border-top-width: 5px; border-bottom-width: 0; }
.pics { position: absolute; left: 7px; top: 7px; display: grid; grid-template-columns: 168px 166px 167px 28px; grid-template-rows: 48px 95px 95px 60px; width: 529px; height: 298px; overflow: hidden; background: #fff; }
.cell { overflow: hidden; border-left: 1px solid #a0a0a0; border-top: 1px solid #a0a0a0; }
.cell svg { display: block; margin: -1px 0 0 -1px; }
.cell text { font-family: "Liberation Serif", serif; fill: #000; }
.sm { font-size: 11px; }
.md { font-size: 16px; }
.lg { font-size: 20px; }
.bold { fill: none; stroke: #000; stroke-width: 2.500; }
.med { fill: none; stroke: #000; stroke-width: 2; }
.arc { fill: none; stroke: #000; stroke-width: .8; }
.hint { position: absolute; left: 173px; top: 31px; font-weight: bold; font-size: 12px; line-height: 16px; letter-spacing: 4px; color: #f0102a; white-space: nowrap; }
.vscroll { grid-column: 4; grid-row: 1 / span 4; position: relative; border-left: 1px solid #a0a0a0; border-top: 1px solid #a0a0a0; background: #fff; }
.vscroll::before { content: ""; position: absolute; left: 12px; right: 0; top: 0; bottom: 0; background: #f0f0f0; border-right: 1px solid #fff; }
.varr { position: absolute; left: 16px; width: 0; height: 0; border: 3px solid transparent; border-left-width: 4px; border-right-width: 4px; }
.varr.up { top: 6px; border-top: 0; border-bottom: 4px solid #555; }
.varr.dn { bottom: 7px; border-bottom: 0; border-top: 4px solid #555; }
.vthumb { position: absolute; left: 12px; top: 67px; width: 15px; height: 101px; border: 1px solid #a8a8a8; border-radius: 2px; background: linear-gradient(90deg, #f5f5f5, #cfcfcf); }
.vthumb em { position: absolute; left: 3px; top: 46px; width: 7px; height: 7px; border-top: 1px solid #777; border-bottom: 1px solid #777; background: linear-gradient(#fff 45%, #777 45%, #777 60%, #fff 60%); }
.d-foot { flex: 1; display: flex; align-items: flex-start; justify-content: space-between; padding: 7px 15px 0 15px; }
.d-btns { display: flex; gap: 15px; margin-top: 2px; }
.pbtn { width: 72px; height: 23px; display: flex; align-items: center; justify-content: center; border: 1px solid #8d8d8d; border-radius: 3px; background: linear-gradient(#f5f5f5 50%, #d6d6d6 52%, #e3e3e3); }

.scribble { position: absolute; left: 0; top: 0; pointer-events: none; }
```
